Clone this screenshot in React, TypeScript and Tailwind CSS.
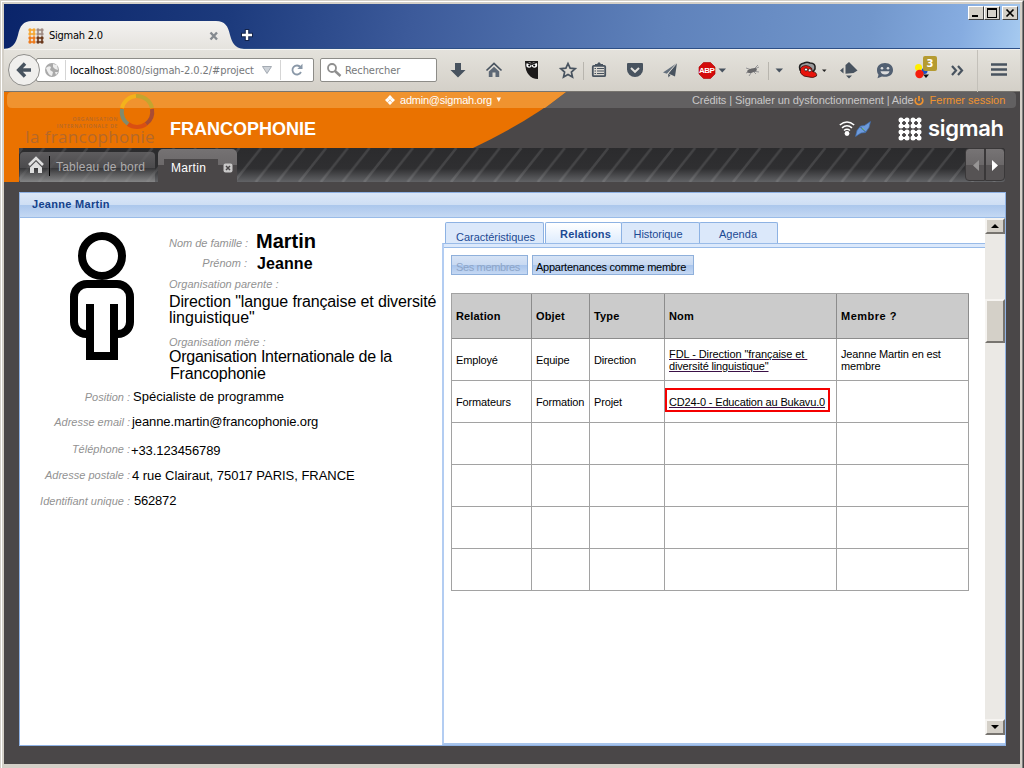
import React from "react";

type Box = { w: number; children: React.ReactNode };

/* One toolbar cell: a 42px high drawing, x measured from the cell's left edge. */
const Cell = ({ w, children }: Box) => (
  <svg width={w} height={42} viewBox={`0 0 ${w} 42`} className="block shrink-0">
    {children}
  </svg>
);

const SLATE = "#48535f";

const Dots = ({ size, colors }: { size: number; colors: string[] }) => (
  <svg width={size} height={size} viewBox="0 0 24 24" className="block shrink-0">
    {[0, 1, 2, 3].map((r) =>
      [0, 1, 2, 3].map((c) => (
        <circle key={`${r}${c}`} cx={3 + c * 6} cy={3 + r * 6} r="2.5" fill={colors[(r > 1 ? 2 : 0) + (c > 1 ? 1 : 0)]} />
      ))
    )}
    {[0, 1, 2, 3].map((i) => (
      <g key={i} strokeWidth="2">
        <path d={`M${3 + i * 6} 3V11`} stroke={colors[i > 1 ? 1 : 0]} />
        <path d={`M${3 + i * 6} 13V21`} stroke={colors[i > 1 ? 3 : 2]} />
        <path d={`M3 ${3 + i * 6}H10`} stroke={colors[i > 1 ? 2 : 0]} />
        <path d={`M14 ${3 + i * 6}H21`} stroke={colors[i > 1 ? 3 : 1]} />
      </g>
    ))}
  </svg>
);

const WinButton = ({ children, className }: { children: React.ReactNode; className?: string }) => (
  <div
    className={`h-[14px] w-[16px] border border-t-white border-l-white border-r-[#404040] border-b-[#404040] bg-[#d4d0c8] ${className ?? ""}`}
  >
    <svg width="14" height="12" viewBox="0 0 14 12" className="block" fill="none" stroke="#000" shapeRendering="crispEdges">
      {children}
    </svg>
  </div>
);

const TitleBar = () => (
  <div className="flex h-[45px] border-b border-[#2d4f86] bg-[linear-gradient(100deg,#0a246a_0%,#1c3a7c_22%,#3c5a9a_40%,#5f82bb_65%,#7297cc_85%,#86ace0_94%,#a6caf0_100%)]">
    <div className="relative h-[45px] w-[230px]">
      <svg width="240" height="45" viewBox="0 0 240 45" className="absolute top-0 left-0">
        <defs>
          <linearGradient id="tab" x1="0" y1="0" x2="0" y2="1">
            <stop offset="0" stopColor="#f3f2f0" />
            <stop offset="1" stopColor="#e5e3de" />
          </linearGradient>
        </defs>
        <path d="M0 45C10 44 12 38 14 31C16 22 19 17 28 17H212C221 17 224 22 226 31C228 38 230 44 240 45Z" fill="url(#tab)" />
      </svg>
      <div className="relative flex items-center pt-[23px] pl-[24px]">
        <Dots size={16} colors={["#f5a733", "#a08d86", "#ee7a1c", "#6b3a1e"]} />
        <span className="ml-[5px] w-[150px] pt-[1px] text-[11px] leading-[16px] tracking-[-0.25px] whitespace-nowrap text-black">Sigmah 2.0</span>
        <svg width="30" height="16" viewBox="0 0 30 16" className="block">
          <path d="M11.500 4.500l6.500 7M18 4.500l-6.500 7" stroke="#858a8f" strokeWidth="2.400" />
        </svg>
      </div>
    </div>
    <svg width="30" height="45" viewBox="0 0 30 45" className="relative block">
      <path d="M13 25v12M7 31h12" stroke="#14244a" strokeWidth="4.500" />
      <path d="M13 26v10M8 31h10" stroke="#fff" strokeWidth="2.400" />
    </svg>
    <div className="ml-auto flex pt-[2px] pr-[2px]">
      <WinButton>
        <path d="M3 9h6" strokeWidth="2" />
      </WinButton>
      <WinButton>
        <path d="M2.500 2v8h9v-8M2 2h10" strokeWidth="1" />
        <path d="M2 2h10" strokeWidth="2" />
      </WinButton>
      <WinButton className="ml-[2px]">
        <path d="M3.500 2.500l7 7M10.500 2.500l-7 7" strokeWidth="1.700" shapeRendering="auto" />
      </WinButton>
    </div>
  </div>
);

const Toolbar = () => (
  <div className="flex h-[43px] border-t border-b border-t-[#f4f3f0] border-b-[#77746f] bg-gradient-to-b from-[#e4e2dc] to-[#d4d0c8]">
    <div className="relative h-full w-[310px] pt-[8px] pl-[32px]">
      <div className="flex h-[24px] w-[278px] items-center rounded-[2px] border border-[#8d8c88] bg-white text-[11px] text-[#76787a]">
        <svg width="29" height="22" viewBox="0 0 29 22" className="block shrink-0">
          <circle cx="15" cy="11" r="7" fill="#a9a9a9" />
          <path d="M9 9q3-3 5-1l-1 3 3 2-1 4q-4-1-6-8zM16 5l4 1 1 5-3-1-2-2zM18 13l3 0-2 3z" fill="#ededed" />
          <path d="M28.500 1v20" stroke="#d5d5d5" />
        </svg>
        <span className="ml-[4px] w-[188px] pt-[1px] leading-[16px] tracking-[-0.09px] whitespace-nowrap">
          <span className="text-black">localhost</span>:8080/sigmah-2.0.2/#project
        </span>
        <svg width="54" height="22" viewBox="0 0 54 22" className="block shrink-0">
          <path d="M4.500 7.500h9l-4.500 7z" fill="#cdd2d8" stroke="#a4abb3" />
          <path d="M22.500 1v20" stroke="#d5d5d5" />
          <path d="M42.500 8.200A4.500 4.500 0 1 0 43 13" fill="none" stroke="#8a98a8" strokeWidth="1.800" />
          <path d="M44.500 4.800v5.200h-5.200z" fill="#8a98a8" />
        </svg>
      </div>
      <svg width="34" height="34" viewBox="0 0 34 34" className="absolute top-[3px] left-[3px]">
        <circle cx="17" cy="17" r="15.500" fill="#f0efed" stroke="#8f8e8b" />
        <path d="M18 10.500l-6.300 6.500 6.300 6.500M12 17h12" fill="none" stroke={SLATE} strokeWidth="3.500" />
      </svg>
    </div>
    <div className="mt-[8px] ml-[6px] flex h-[24px] w-[117px] items-center rounded-[2px] border border-[#8d8c88] bg-white">
      <svg width="24" height="22" viewBox="0 0 24 22" className="block" fill="none" stroke="#8f8f8f">
        <circle cx="11" cy="9" r="4" strokeWidth="1.800" />
        <path d="M14 12l5.500 5" strokeWidth="2.500" />
      </svg>
      <span className="pt-[2px] text-[11px] leading-[16px] tracking-[-0.08px] text-[#76787a]">Rechercher</span>
    </div>
    <div className="ml-[3px] flex">
      <Cell w={36}>
        <path d="M15 13h6v7h4.500L18 27.500 10.500 20H15z" fill={SLATE} />
      </Cell>
      <Cell w={36}>
        <path d="M10.500 20.500L18 13.500l7.500 7" fill="none" stroke={SLATE} strokeWidth="1.700" />
        <path d="M18 16.800l5.200 4.700V27h-3.700v-4.500h-3V27h-3.700v-5.500z" fill="#5d6875" />
      </Cell>
      <Cell w={40}>
        <path d="M13 11h13v18q-6 0-9-4-4-4-4-14z" fill="#1c1a1a" />
        <circle cx="17" cy="15" r="2.700" fill="#fff" />
        <circle cx="22.500" cy="15" r="2.700" fill="#fff" />
        <path d="M14 12l5.500 2.500L25 12" stroke="#1c1a1a" fill="none" strokeWidth="1.400" />
        <circle cx="17.300" cy="15.500" r="1.100" />
        <circle cx="22.200" cy="15.500" r="1.100" />
      </Cell>
      <Cell w={32}>
        <path d="M16 13.500l2.100 4.700 5.100.5-3.800 3.400 1.100 5-4.500-2.600-4.500 2.600 1.100-5-3.800-3.400 5.100-.5z" fill="none" stroke={SLATE} strokeWidth="1.700" />
        <path d="M31.500 12v18" stroke="#b8b5ae" />
      </Cell>
      <Cell w={30}>
        <rect x="8.800" y="15.800" width="12.400" height="10.400" rx="1" fill="none" stroke={SLATE} strokeWidth="1.800" />
        <path d="M11 14h2l2-2 2 2h2v2h-8z" fill={SLATE} />
        <path d="M10.500 18.500h1.500M13 18.500h7M10.500 21h1.500M13 21h7M10.500 23.500h1.500M13 23.500h7" stroke={SLATE} strokeWidth="1.200" />
      </Cell>
      <Cell w={42}>
        <path d="M13 14q0-1 1-1h14q1 0 1 1v5.500a8 7.500 0 0 1-16 0z" fill={SLATE} />
        <path d="M17 18l4 3.800 4-3.800" fill="none" stroke="#e2e0db" strokeWidth="2" />
      </Cell>
      <Cell w={28}>
        <path d="M21 13L7 22.500l4 1.200z" fill="#65717e" />
        <path d="M21 13l-8.500 10.500L19 26.500zM12 24l2.500 1-2 2.500z" fill={SLATE} />
        <path d="M21 13l-9.500 11v3" stroke="#dcdad4" strokeWidth=".7" fill="none" />
      </Cell>
      <div className="relative">
        <Cell w={56}>
          <path d="M19.500 12.500h7L31 17v7l-4.500 4.500h-7L15 24v-7z" fill="#d40b0b" stroke="#a60000" strokeWidth=".6" />
          <path d="M34.500 18.500h7.500l-3.700 4z" fill={SLATE} />
        </Cell>
        <span className="absolute top-[16px] left-[15px] font-['Liberation_Sans',sans-serif] text-[8px] leading-[10px] font-bold tracking-[-0.5px] text-white">ABP</span>
      </div>
      <Cell w={50}>
        <path d="M6 18l6 2 7-3M6 23l6-2 7 1M9 26l4-6 5-5M13 21l3 3" stroke="#8c8c8e" strokeWidth=".9" fill="none" />
        <ellipse cx="12" cy="20.500" rx="5" ry="2" fill="#68686a" transform="rotate(-15 12 20.500)" />
        <path d="M28.500 12v18" stroke="#b8b5ae" />
        <path d="M35.500 18.500h7.500l-3.700 4z" fill={SLATE} />
      </Cell>
      <Cell w={42}>
        <path d="M10 20q-2-6 4-7 3-1.500 6 0 6 0 5 6l-2 3z" fill="#9a9a9c" stroke="#222" strokeWidth="1.600" />
        <path d="M10.500 18q5-5 11 0l1 3.500q5 1 4 4.500-3.500 2.500-7.500 1-6 0-8.500-4z" fill="#e8140c" stroke="#38100c" strokeWidth=".8" />
        <circle cx="16" cy="19.500" r="1.500" fill="#fff" stroke="#111" strokeWidth=".7" />
        <circle cx="19.800" cy="20.300" r="1.500" fill="#fff" stroke="#111" strokeWidth=".7" />
        <path d="M32 19.500h4.500l-2.200 2.500z" fill="#222" />
      </Cell>
      <Cell w={34}>
        <path d="M17 12l8.500 8.500-4 2.500-8 .8V15z" fill={SLATE} />
        <path d="M11.500 17.500v6l-3.500-3zM14 25.500h6l-3 3z" fill={SLATE} />
      </Cell>
      <Cell w={38}>
        <path d="M19 13c5 0 8 3 8 7s-3 6.800-8 6.800c-1 0-2 0-3-.3l-4.500 1.700 1-3.500C11.500 23.500 11 22 11 20c0-4 3-7 8-7z" fill="#526072" />
        <circle cx="16" cy="18.300" r="1.300" fill="#ddd" />
        <circle cx="22" cy="18.300" r="1.300" fill="#ddd" />
        <path d="M14.500 21.200h9q-1 3.300-4.500 3.300t-4.500-3.300z" fill="#ddd" />
      </Cell>
      <div className="relative">
        <Cell w={40}>
          <circle cx="14.500" cy="17.500" r="3.500" fill="#ffee00" />
          <circle cx="20.500" cy="21" r="3" fill="#1d50c4" />
          <circle cx="15.500" cy="24" r="4.200" fill="#f51d0c" />
          <path d="M19 24.500h6l-3 3.500z" fill="#111" />
        </Cell>
        <span className="absolute top-[6px] left-[19px] h-[15px] w-[14px] rounded-[2px] bg-[#b59b31] text-center font-['DejaVu_Sans',sans-serif] text-[10px] leading-[15px] font-bold text-white [font-stretch:100%]">3</span>
      </div>
      <Cell w={34}>
        <path d="M8 16l4 4.500-4 4.500M14 16l4 4.500-4 4.500" fill="none" stroke={SLATE} strokeWidth="2.200" />
        <path d="M33.500 0v42" stroke="#c3c0b9" />
      </Cell>
      <Cell w={38}>
        <path d="M13 14.500h16M13 19.500h16M13 24.500h16" stroke={SLATE} strokeWidth="2.600" />
      </Cell>
    </div>
  </div>
);

const Header = () => (
  <div className="relative h-[56px] bg-[#4a4748]">
    <svg width="1016" height="56" viewBox="0 0 1016 56" className="absolute inset-0 block">
      <path d="M0 0H562Q524 30 469 56H0Z" fill="#ea7200" />
      <path d="M562 0H1008q4 0 4 4v8q0 4-4 4H541z" fill="#626061" />
      <path d="M8 0H562L541 16H8q-5 0-5-5V5q0-5 5-5z" fill="#f0932f" />
      <g fill="none" strokeWidth="4">
        <path d="M118 16A15.500 15.500 0 0 1 132 4" stroke="#f3b21c" />
        <path d="M132 4A15.500 15.500 0 0 1 148 16" stroke="#c3a52f" />
        <path d="M148 17A15.500 15.500 0 0 1 142 32" stroke="#a84c34" />
        <path d="M142 32A15.500 15.500 0 0 1 124 32" stroke="#d94f12" />
        <path d="M124 32A15.500 15.500 0 0 1 118 17" stroke="#7f8b6e" />
      </g>
    </svg>
    <div className="relative flex h-[56px]">
      <div className="flex w-[154px] flex-col items-end pt-[24px] pr-[3px] text-[#b4682b]">
        <div className="pr-[37px] text-right [font-family:'Open_Sans',sans-serif] text-[5px] leading-[7px] font-semibold tracking-[0.65px] whitespace-nowrap">
          ORGANISATION
          <br />
          INTERNATIONALE DE
        </div>
        <div className="mt-[-1px] [font-family:'Open_Sans',sans-serif] text-[17px] leading-[16px] tracking-[0.35px] whitespace-nowrap">la francophonie</div>
      </div>
      <h1 className="ml-[12px] w-[215px] pt-[27px] text-[18px] leading-[20px] font-bold text-white">FRANCOPHONIE</h1>
      <div className="flex h-[16px] items-center text-[11px] text-white">
        <svg width="10" height="10" viewBox="0 0 10 10" className="block" fill="#fff">
          <path d="M5 0l2.500 2.500L5 5 2.500 2.500zM2.500 2.800L4.800 5 2.500 7.500 0 5zM7.500 2.800L10 5 7.500 7.500 5.200 5zM5 5.500l2.300 2.200L5 10 2.700 7.700z" />
        </svg>
        <span className="ml-[5px] w-[95px] tracking-[-0.22px]">admin@sigmah.org</span>
        <svg width="12" height="10" viewBox="0 0 12 10" className="block">
          <path d="M1.500 2.500h4.500l-2.200 4.500z" fill="#fff" />
        </svg>
      </div>
      <div className="ml-auto w-[328px]">
        <div className="flex h-[17px] items-center text-[11px] whitespace-nowrap text-[#c9c7c7]">
          <span className="tracking-[-0.08px]">Crédits | Signaler un dysfonctionnement | Aide</span>
          <svg width="10" height="10" viewBox="0 0 10 10" className="block shrink-0" fill="none" stroke="#f0932f" strokeWidth="1.700">
            <path d="M2.300 2a3.800 3.800 0 1 0 5.400 0M5 0v5" />
          </svg>
          <span className="ml-[6px] text-[#f0932f]">Fermer session</span>
        </div>
        <div className="flex items-center pt-[8px] pl-[147px]">
          <svg width="34" height="20" viewBox="0 0 34 20" className="block shrink-0">
            <g fill="none" stroke="#fff" strokeWidth="1.600">
              <path d="M.8 6Q8 0 15.200 6M3 8.800Q8 4.800 13 8.800M5 11.500Q8 9 11 11.500" />
            </g>
            <circle cx="8" cy="14.500" r="2.400" fill="#fff" />
            <path d="M16.500 17.500l1.500-6 3.500-4.500 4-.5 6-4-1.500 6-3.500 5-4.500.5z" fill="#6d9bdc" stroke="#3d6cae" strokeWidth=".7" />
            <path d="M21.500 8l5 5" stroke="#274f86" strokeWidth=".9" />
            <path d="M23 9l2.500 2.500" stroke="#6cb35a" />
          </svg>
          <div className="ml-[25px]">
            <Dots size={24} colors={["#fff", "#fff", "#fff", "#fff"]} />
          </div>
          <span className="ml-[6px] mt-[-3px] [font-family:Inter,sans-serif] text-[22px] leading-[24px] font-semibold tracking-[-0.3px] text-white">sigmah</span>
        </div>
      </div>
    </div>
  </div>
);

const Stripes = () => (
  <svg width="986" height="34" className="absolute inset-0 block">
    <defs>
      <linearGradient id="strip" x1="0" y1="0" x2="0" y2="1">
        <stop offset="0" stopColor="#2b2b2d" />
        <stop offset=".6" stopColor="#2f2f31" />
        <stop offset="1" stopColor="#626366" />
      </linearGradient>
      <pattern id="diag" width="21.700" height="34" patternUnits="userSpaceOnUse">
        <path d="M-2 34L25 0M-23.700 34L3.300 0M19.700 34L46.700 0" stroke="#fff" strokeOpacity=".11" strokeWidth="2.500" />
      </pattern>
    </defs>
    <rect width="986" height="34" rx="3" fill="url(#strip)" />
    <rect width="986" height="34" fill="url(#diag)" />
  </svg>
);

const AppTabs = () => (
  <div className="flex h-[34px] bg-[#4a4748]">
    <div className="w-[15px] bg-[#ea7200]" />
    <div className="relative w-[986px]">
      <Stripes />
      <div className="relative flex h-[34px]">
        <div className="ml-[1px] mt-[4px] flex h-[30px] w-[135px] items-center rounded-t-[4px] bg-[linear-gradient(180deg,rgba(110,108,110,0.75)_0,rgba(85,84,86,0.75)_52%,rgba(60,60,62,0.5)_53%,rgba(150,150,150,0.65)_100%)]">
          <svg width="30" height="30" viewBox="0 0 30 30" className="block shrink-0">
            <path d="M9 13l7-7 7 7" fill="none" stroke="#dedede" strokeWidth="2.600" />
            <path d="M16 9.500l6 6v5.500h-4v-5h-4v5h-4v-5.500z" fill="#dedede" />
            <path d="M29.500 4v20" stroke="#000" />
          </svg>
          <span className="ml-[6px] text-[12px] leading-[14px] tracking-[0.2px] whitespace-nowrap text-[#aeacad]">Tableau de bord</span>
        </div>
        <div className="ml-[3px] mt-[1px] flex h-[33px] w-[79px] rounded-t-[5px] bg-[linear-gradient(180deg,#757273_0,#6c696a_48%,#4a4748_49%)]">
          <div className="ml-[6px] mt-[10px] h-[20px] w-[54px] bg-[#4a4748] pl-[7px] text-[12px] leading-[18px] tracking-[0.3px] text-white">Martin</div>
          <svg width="10" height="10" viewBox="0 0 10 10" className="mt-[14px] ml-[5px] block">
            <rect x=".5" y=".5" width="9" height="9" rx="2" fill="#c9c8c8" />
            <path d="M3 3l4 4M7 3L3 7" stroke="#4a4748" strokeWidth="1.500" />
          </svg>
        </div>
        <div className="ml-auto flex">
          {["M13 11v11l-6-5.500z", "M6 11v11l6-5.500z"].map((d, i) => (
            <div
              key={d}
              className={`h-[33px] w-[20px] border border-[#3a3839] bg-[linear-gradient(180deg,#777475_0,#6b6869_50%,#565354_51%,#565354_100%)] ${i ? "rounded-r-[4px]" : "rounded-l-[4px]"}`}
            >
              <svg width="18" height="31" viewBox="0 0 18 31" className="block">
                <path d={d} fill={i ? "#fff" : "#979595"} />
              </svg>
            </div>
          ))}
        </div>
      </div>
    </div>
  </div>
);

const label = "shrink-0 text-[11px] leading-[12px] italic text-[#929292] whitespace-nowrap";

const details = [
  { l: "Position :", v: "Spécialiste de programme", lc: "mt-[2px]", vc: "ml-[3px]", row: "h-[25px]" },
  { l: "Adresse email :", v: "jeanne.martin@francophonie.org", lc: "mt-[2px]", vc: "ml-[2px] tracking-[-0.11px]", row: "h-[29px]" },
  { l: "Téléphone :", v: "+33.123456789", lc: "mt-0", vc: "ml-[1px] tracking-[-0.1px]", row: "h-[25px]" },
  { l: "Adresse postale :", v: "4 rue Clairaut, 75017 PARIS, FRANCE", lc: "mt-[1px]", vc: "ml-[2px] tracking-[-0.03px]", row: "h-[25px]" },
  { l: "Identifiant unique :", v: "562872", lc: "mt-[2px]", vc: "ml-[4px] tracking-[-0.2px]", row: "h-[25px]" },
];

const Profile = () => (
  <div className="w-[422px] shrink-0 text-black">
    <div className="flex h-[164px]">
      <svg width="148" height="150" viewBox="0 0 148 150" className="block shrink-0" fill="none" stroke="#000" strokeWidth="8">
        <circle cx="82" cy="38" r="20" />
        <path d="M70 116H66A12 12 0 0 1 54 104V79A13 13 0 0 1 67 66H97A13 13 0 0 1 110 79V104A12 12 0 0 1 98 116H94" />
        <path d="M70 86V138H94V86" />
      </svg>
      <div className="pl-[1px] pt-[11px]">
        <div className="flex h-[24px]">
          <span className={`${label} mt-[8px] w-[87px] tracking-[-0.02px]`}>Nom de famille :</span>
          <span className="text-[20px] leading-[24px] font-bold">Martin</span>
        </div>
        <div className="flex h-[22px]">
          <span className={`${label} mt-[4px] w-[78px] text-right`}>Prénom :</span>
          <span className="ml-[10px] mt-[1px] text-[16px] leading-[20px] font-bold tracking-[0.1px]">Jeanne</span>
        </div>
        <div className={`${label} mt-[3px] tracking-[0.03px]`}>Organisation parente :</div>
        <div className="mt-[4px] text-[16px] leading-[16px] tracking-[-0.13px] whitespace-nowrap">
          Direction "langue française et diversité
          <br />
          <span className="tracking-[0px]">linguistique"</span>
        </div>
        <div className={`${label} mt-[10px]`}>Organisation mère :</div>
        <div className="text-[16px] leading-[17px] tracking-[-0.25px] whitespace-nowrap">
          Organisation Internationale de la
          <br />
          <span className="pl-[1px] tracking-[-0.18px]">Francophonie</span>
        </div>
      </div>
    </div>
    <div className="pt-[7px]">
      {details.map((d) => (
        <div key={d.l} className={`flex ${d.row}`}>
          <span className={`${label} ${d.lc} w-[110px] text-right`}>{d.l}</span>
          <span className={`${d.vc} text-[13px] leading-[16px] whitespace-nowrap`}>{d.v}</span>
        </div>
      ))}
    </div>
  </div>
);

const InnerTab = ({ text, className }: { text: string; className: string }) => (
  <div className={`rounded-t-[2px] border border-b-0 border-[#8db2e3] text-center text-[11px] text-[#1c4a94] whitespace-nowrap ${className}`}>{text}</div>
);

const rows = [
  ["Employé", "Equipe", "Direction", "fdl", "Jeanne Martin en est membre"],
  ["Formateurs", "Formation", "Projet", "cd", ""],
  ["", "", "", "", ""],
  ["", "", "", "", ""],
  ["", "", "", "", ""],
  ["", "", "", "", ""],
];

const line = "border-r border-b border-[#a2a2a2]";

const Relations = () => (
  <div className="flex w-[543px] shrink-0 flex-col">
    <div className="flex h-[25px] pt-[4px] pl-[3px]">
      <InnerTab text="Caractéristiques" className="w-[99px] bg-[#dbe8fa] pt-[2px] pl-[2px] leading-[24px] tracking-[-0.04px]" />
      <InnerTab text="Relations" className="ml-[1px] w-[77px] bg-gradient-to-b from-white to-[#deecfd] pl-[4px] leading-[23px] font-bold tracking-[0.15px]" />
      <InnerTab text="Historique" className="ml-[-1px] w-[79px] bg-[#dbe8fa] pr-[5px] leading-[23px] tracking-[-0.05px]" />
      <InnerTab text="Agenda" className="ml-[-1px] w-[79px] bg-[#dbe8fa] pr-[1px] leading-[23px] tracking-[0.05px]" />
    </div>
    <div className="flex flex-1 flex-col border-t border-b-2 border-l-2 border-t-[#99bbe8] border-b-[#a9c5ec] border-l-[#b3cdf2] pl-[7px]">
      <div className="ml-[-7px] h-[4px] border-b border-[#99bbe8] bg-[#dce9fb]" />
      <div className="flex gap-[4px] pt-[7px]">
        <div className="h-[20px] w-[77px] border border-[#8fb0db] bg-[linear-gradient(180deg,#d6e3f5_0,#c9daf2_48%,#a9c5ec_50%,#c5d8f3_100%)] pl-[4px] text-[11px] leading-[23px] tracking-[-0.35px] whitespace-nowrap text-[#8da5c8]">
          Ses membres
        </div>
        <div className="h-[20px] w-[162px] border border-[#8fb0db] bg-[linear-gradient(180deg,#d6e3f5_0,#c9daf2_48%,#a9c5ec_50%,#c5d8f3_100%)] pl-[3px] text-[11px] leading-[22px] tracking-[-0.25px] whitespace-nowrap text-black">
          Appartenances comme membre
        </div>
      </div>
      <div className="mt-[18px] grid w-[518px] grid-cols-[80px_58px_75px_172px_132px] grid-rows-[45px_repeat(6,42px)] border-t border-l border-[#a2a2a2] text-[11px] leading-[12px] text-black">
        {["Relation", "Objet", "Type", "Nom", "Membre ?"].map((h) => (
          <div key={h} className={`flex items-center border-r border-b border-[#8c8c8c] bg-[#cbcbcb] pl-[4px] font-bold ${h === "Membre ?" ? "tracking-[0.5px]" : "tracking-[0.15px]"}`}>
            {h}
          </div>
        ))}
        {rows.map((r, i) =>
          r.map((c, j) => (
            <div key={`${i}-${j}`} className={`flex items-center tracking-[-0.15px] ${line} ${c === "cd" ? "" : "pl-[4px]"}`}>
              {c === "fdl" ? (
                <span className="tracking-[-0.07px] whitespace-pre underline decoration-[#3a1046] underline-offset-[1px]">
                  {'FDL - Direction "française et \n'}
                  <span className="tracking-[-0.15px]">diversité linguistique"</span>
                </span>
              ) : c === "cd" ? (
                <span className="mb-[4px] h-[24px] w-[165px] border-2 border-[#f50000] pl-[2px] leading-[25px] tracking-[-0.16px] whitespace-nowrap underline decoration-[#3a1046] underline-offset-[1px]">
                  CD24-0 - Education au Bukavu.0
                </span>
              ) : (
                <span>{c}</span>
              )}
            </div>
          ))
        )}
      </div>
    </div>
  </div>
);

const bevel = "border-2 border-t-[#f6f4f1] border-l-[#f6f4f1] border-r-[#77746f] border-b-[#77746f] bg-[#d4d0c8]";

const Scrollbar = () => (
  <div className="flex w-[20px] flex-col border-b-2 border-[#a9c5ec]">
    <div className="mb-[8px] flex flex-1 flex-col bg-[#ebe9e5]">
      <div className={`h-[16px] ${bevel}`}>
        <svg width="16" height="12" viewBox="0 0 16 12" className="block">
          <path d="M4 8h8L8 4z" />
        </svg>
      </div>
      <div className={`mt-[65px] h-[44px] ${bevel}`} />
      <div className={`mt-auto h-[16px] ${bevel}`}>
        <svg width="16" height="12" viewBox="0 0 16 12" className="block">
          <path d="M4 4h8L8 8z" />
        </svg>
      </div>
    </div>
  </div>
);

export default function App() {
  return (
    <div className="flex h-[768px] w-[1024px] overflow-hidden bg-[#d4d0c8] font-['Liberation_Sans',sans-serif]">
      <div className="flex w-full border-t border-r border-l border-t-[#d4d0c8] border-r-[#404040] border-l-[#d4d0c8]">
        <div className="flex w-full flex-col border-t border-r border-l border-t-white border-r-[#808080] border-l-white pt-[2px] pr-[2px] pb-[4px] pl-[2px]">
          <div className="w-[1016px] font-['DejaVu_Sans_Condensed','DejaVu_Sans',sans-serif] [font-stretch:75%]">
            <TitleBar />
            <Toolbar />
          </div>
          <Header />
          <AppTabs />
          <main className="flex-1 bg-[#4a4748] pt-[10px] pl-[15px]">
            <section className="flex h-[554px] w-[987px] flex-col border border-[#8fb2e4] bg-white">
              <h2 className="h-[25px] border-b border-[#99bbe8] bg-[linear-gradient(180deg,#dce8f8_0,#cfdff4_48%,#abc7ec_50%,#c4d8f3_100%)] pl-[12px] text-[11px] leading-[23px] font-bold tracking-[0.3px] text-[#15428b]">
                Jeanne Martin
              </h2>
              <div className="flex flex-1">
                <Profile />
                <Relations />
                <Scrollbar />
              </div>
            </section>
          </main>
        </div>
      </div>
    </div>
  );
}
